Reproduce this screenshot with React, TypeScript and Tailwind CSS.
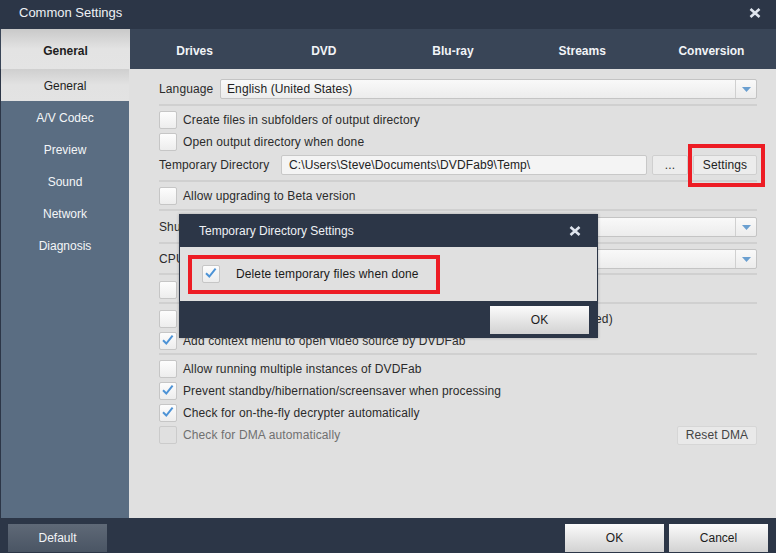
import React from 'react'

const font = { fontFamily: '"Liberation Sans", Arial, sans-serif' }

function CloseX() {
  return (
    <svg width="12" height="10" viewBox="0 0 12 10" className="block">
      <path d="M1.5 1 L10.5 9 M10.5 1 L1.5 9" stroke="#dfe5ee" strokeWidth="2.6" strokeLinecap="butt" />
    </svg>
  )
}

function Check({ on = false, disabled = false }: { on?: boolean; disabled?: boolean }) {
  return (
    <div
      className={
        'w-[18px] h-[18px] shrink-0 rounded-[2px] border ' +
        (disabled
          ? 'border-[#cbcbcb] bg-[#e0e0e0]'
          : 'border-[#c6c6c6] bg-gradient-to-b from-[#fdfdfd] to-[#ededed]')
      }
    >
      {on && (
        <svg width="16" height="16" viewBox="0 0 16 16" className="block">
          <path d="M3 7.2 L6.3 10.5 L12.6 2.6" stroke="#4d93d6" strokeWidth="2" fill="none" strokeLinejoin="miter" />
        </svg>
      )}
    </div>
  )
}

function CheckRow({
  label,
  on = false,
  disabled = false,
  className = '',
  children,
}: {
  label: string
  on?: boolean
  disabled?: boolean
  className?: string
  children?: React.ReactNode
}) {
  return (
    <div className={'h-[22px] flex items-center ' + className}>
      <Check on={on} disabled={disabled} />
      <span className={'ml-[6px] whitespace-nowrap ' + (disabled ? 'text-[#707070]' : 'text-[#2b2b2b]')}>{label}</span>
      {children}
    </div>
  )
}

function Select({ value = '', className = '' }: { value?: string; className?: string }) {
  return (
    <div
      className={
        'h-[20px] flex items-stretch rounded-[2px] border border-[#c4c4c4] bg-gradient-to-b from-[#f9f9f9] to-[#ececec] ' +
        className
      }
    >
      <div className="flex-1 flex items-center pl-[6px] text-[#222] whitespace-nowrap">{value}</div>
      <div className="w-[21px] border-l border-[#d0d0d0] flex items-center justify-center">
        <svg width="9" height="5" viewBox="0 0 9 5">
          <path d="M0 0 H9 L4.5 5 Z" fill="#6a9fd0" />
        </svg>
      </div>
    </div>
  )
}

function Sep({ className = '' }: { className?: string }) {
  return <div className={'h-[2px] bg-[#d0d0d0] ' + className} />
}

function LightButton({ children, className = '' }: { children: React.ReactNode; className?: string }) {
  return (
    <div
      className={
        'flex items-center justify-center bg-gradient-to-b from-[#fbfbfb] to-[#d2d2d2] text-[#1c1c1c] ' + className
      }
    >
      {children}
    </div>
  )
}

export default function App() {
  const tabs = ['Drives', 'DVD', 'Blu-ray', 'Streams', 'Conversion']
  const side = ['A/V Codec', 'Preview', 'Sound', 'Network', 'Diagnosis']
  return (
    <div style={font} className="w-[776px] h-[553px] flex flex-col bg-[#2c3647] text-[12px] overflow-hidden">
      {/* title bar */}
      <div className="h-[29px] flex items-center justify-between pl-[19px] pr-[15px] pb-[4px] text-[13px] text-[#eef1f5]">
        <span>Common Settings</span>
        <CloseX />
      </div>

      {/* tab row */}
      <div className="h-[40px] flex bg-[#394557]">
        <div className="w-[129px] ml-[1px] pt-[3px] flex items-center justify-center bg-gradient-to-b from-[#c9c9c9] via-[#e3e3e3] to-[#e4e4e4] font-bold text-[#1e1e1e]">
          General
        </div>
        {tabs.map((t) => (
          <div key={t} className="flex-1 pt-[3px] flex items-center justify-center font-bold text-[#f2f4f7]">
            {t}
          </div>
        ))}
      </div>

      {/* middle */}
      <div className="flex-1 flex min-h-0">
        <div className="w-[128px] ml-[1px] bg-[#5a6d82] flex flex-col">
          <div className="h-[32px] pt-[1px] flex items-center justify-center bg-gradient-to-b from-[#cfcfcf] via-[#e2e2e2] to-[#e3e3e3] text-[#1e1e1e]">
            General
          </div>
          {side.map((s) => (
            <div key={s} className="h-[32px] pt-[1px] flex items-center justify-center text-[#f4f6f8]">
              {s}
            </div>
          ))}
        </div>

        <div className="relative flex-1 bg-[#e0e0e0] pl-[30px] pr-[19px] tracking-[0.12px]">
          <div className="flex flex-col">
            <div className="h-[22px] mt-[9px] flex items-center">
              <span className="text-[#2b2b2b] w-[61px]">Language</span>
              <Select value="English (United States)" className="flex-1" />
            </div>
            <Sep className="mt-[4px]" />
            <CheckRow className="mt-[3px]" label="Create files in subfolders of output directory" />
            <CheckRow label="Open output directory when done" />
            <div className="h-[22px] mt-[1px] flex items-center">
              <span className="text-[#2b2b2b] w-[122px]">Temporary Directory</span>
              <div className="w-[366px] h-[20px] flex items-center pl-[7px] rounded-[2px] border border-[#c8c8c8] bg-[#f4f4f4] text-[#222] whitespace-nowrap">
                C:\Users\Steve\Documents\DVDFab9\Temp\
              </div>
              <div className="ml-[5px] w-[36px] h-[20px] flex items-center justify-center rounded-[2px] border border-[#cfcfcf] bg-[#ececec] text-[#333]">
                ...
              </div>
              <div className="relative ml-[5px]">
                <div className="w-[64px] h-[20px] flex items-center justify-center rounded-[2px] border border-[#cfcfcf] bg-[#ececec] text-[#222]">
                  Settings
                </div>
                <div className="absolute left-[-5px] right-[-8px] top-[-11px] bottom-[-12px] border-[4px] border-[#ed1c24]" />
              </div>
            </div>
            <Sep className="mt-[4px]" />
            <CheckRow className="mt-[3px]" label="Allow upgrading to Beta version" />
            <Sep className="mt-[2px]" />
            <div className="h-[22px] mt-[5px] flex items-center">
              <span className="text-[#2b2b2b] w-[61px] whitespace-nowrap">Shutdown</span>
              <Select className="flex-1" />
            </div>
            <Sep className="mt-[4px]" />
            <div className="h-[22px] mt-[4px] flex items-center">
              <span className="text-[#2b2b2b] w-[61px] whitespace-nowrap">CPU</span>
              <Select className="flex-1" />
            </div>
            <Sep className="mt-[3px]" />
            <CheckRow className="mt-[4px]" label="Enable Windows 7 taskbar features" />
            <Sep className="mt-[1px]" />
            <CheckRow className="mt-[4px]" label="Enable Windows 7 taskbar thumbnail preview for DVDFab app (restart needed)" />
            <CheckRow on label="Add context menu to open video source by DVDFab" />
            <Sep className="mt-[1px]" />
            <CheckRow className="mt-[3px]" label="Allow running multiple instances of DVDFab" />
            <CheckRow on label="Prevent standby/hibernation/screensaver when processing" />
            <CheckRow on label="Check for on-the-fly decrypter automatically" />
            <CheckRow disabled label="Check for DMA automatically">
              <div className="ml-auto w-[80px] h-[19px] flex items-center justify-center rounded-[2px] border border-[#d6d6d6] bg-[#e9e9e9] text-[#444]">
                Reset DMA
              </div>
            </CheckRow>
          </div>

          {/* modal dialog */}
          <div className="absolute left-[50px] top-[145px] w-[419px] flex flex-col bg-[#2c3647] shadow-[0_0_3px_rgba(0,0,0,0.25)] tracking-normal">
            <div className="h-[33px] flex items-center justify-between pl-[20px] pr-[17px] text-[#eef1f5]">
              <span>Temporary Directory Settings</span>
              <CloseX />
            </div>
            <div className="mx-[1px] h-[54px] bg-[#e0e0e0] flex items-center pl-[8px]">
              <div className="w-[252px] h-[39px] border-[4px] border-[#ed1c24] flex items-center pl-[10px]">
                <Check on />
                <span className="ml-[16px] text-[#1a1a1a] tracking-[0.12px]">Delete temporary files when done</span>
              </div>
            </div>
            <div className="h-[37px] flex items-center justify-end pr-[9px]">
              <LightButton className="w-[99px] h-[28px]">OK</LightButton>
            </div>
          </div>
        </div>
      </div>

      {/* bottom bar */}
      <div className="h-[35px] flex items-center px-[8px]">
        <div className="w-[99px] h-[28px] mt-[4px] flex items-center justify-center bg-gradient-to-b from-[#5f6977] to-[#4a5564] text-[#f2f4f7]">
          Default
        </div>
        <div className="ml-auto flex gap-[5px] mt-[4px]">
          <LightButton className="w-[99px] h-[28px]">OK</LightButton>
          <LightButton className="w-[99px] h-[28px]">Cancel</LightButton>
        </div>
      </div>
    </div>
  )
}
